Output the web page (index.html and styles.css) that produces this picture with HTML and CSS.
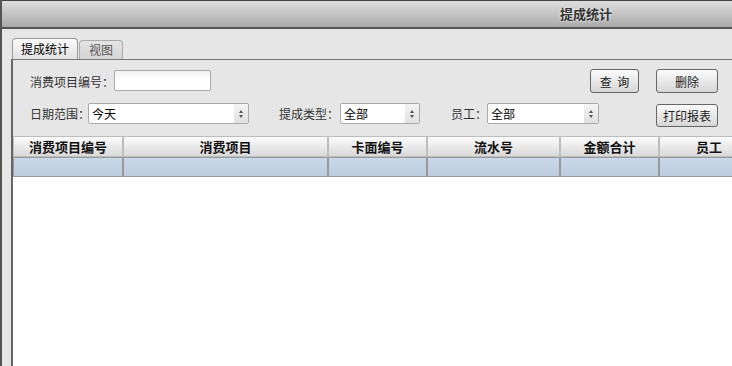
FILE: index.html
```html
<!DOCTYPE html>
<html lang="zh-CN">
<head>
    <meta charset="UTF-8">
    <title>提成统计</title>
    <link rel="stylesheet" href="styles.css">
</head>
<body>

<div class="window">
    <div class="titlebar">提成统计</div>

    <div class="content">
        <div class="tabs">
            <div class="tab active">提成统计</div>
            <div class="tab">视图</div>
        </div>

        <div class="panel">
            <div class="form">
                <div class="row">
                    <label class="lbl lbl-first">消费项目编号：</label>
                    <input type="text" class="txt">
                    <button class="btn btn-query">查&nbsp;&nbsp;询</button>
                    <button class="btn btn-del">删除</button>
                </div>
                <div class="row row-top">
                    <label class="lbl lbl-first lbl-date">日期范围：</label>
                    <div class="sel sel-date"><span>今天</span><i class="arr"></i></div>
                    <label class="lbl lbl-type">提成类型：</label>
                    <div class="sel sel-type"><span>全部</span><i class="arr"></i></div>
                    <label class="lbl lbl-emp">员工：</label>
                    <div class="sel sel-emp"><span>全部</span><i class="arr"></i></div>
                    <button class="btn btn-print">打印报表</button>
                </div>
            </div>

            <div class="grid">
                <div class="hrow">
                    <div class="hc c1">消费项目编号</div>
                    <div class="hc c2">消费项目</div>
                    <div class="hc c3">卡面编号</div>
                    <div class="hc c4">流水号</div>
                    <div class="hc c5">金额合计</div>
                    <div class="hc c6">员工</div>
                </div>
                <div class="drow">
                    <div class="dc c1"></div>
                    <div class="dc c2"></div>
                    <div class="dc c3"></div>
                    <div class="dc c4"></div>
                    <div class="dc c5"></div>
                    <div class="dc c6"></div>
                </div>
            </div>
        </div>
    </div>
</div>

</body>
</html>
```

FILE: styles.css
```css
html, body {
    margin: 0;
    padding: 0;
    width: 732px;
    height: 366px;
    overflow: hidden;
    background: #e6e6e6;
    font-family: "Noto Sans CJK SC", "DejaVu Sans", sans-serif;
}
.window {
    height: 366px;
    border-left: 2px solid #555;
    box-sizing: border-box;
}
.titlebar {
    height: 29px;
    box-sizing: border-box;
    border-top: 1px solid #444;
    border-bottom: 2px solid #555;
    background: linear-gradient(#dedede, #a9a9a9);
    padding-left: 558px;
    line-height: 26px;
    font-size: 13px;
    font-weight: bold;
    color: #333;
    text-shadow: 0 0 3px #fff;
}
.content {
    background: #e6e6e6;
    height: 337px;
}
.tabs {
    display: flex;
    align-items: flex-end;
    padding-left: 10px;
    height: 30px;
}
.tab {
    height: 18px;
    line-height: 17px;
    font-size: 12px;
    color: #555;
    padding: 0 9px;
    border: 1px solid #aaa;
    border-bottom: none;
    border-radius: 4px 4px 0 0;
    background: linear-gradient(#e4e4e4, #d4d4d4);
    margin-right: 1px;
}
.tab.active {
    height: 20px;
    line-height: 20px;
    color: #000;
    padding: 0 8px;
    border-color: #999;
    background: linear-gradient(#fafafa, #e2e2e2);
}
.panel {
    margin-left: 9px;
    border-left: 2px solid #666;
    border-top: 1px solid #777;
    height: 307px;
}
.form {
    padding-top: 9px;
    height: 67px;
}
.row {
    display: flex;
    align-items: center;
    height: 24px;
    margin-bottom: 10px;
}
.row-top {
    align-items: flex-start;
}
.row-top .lbl {
    line-height: 21px;
}
.lbl {
    font-size: 12px;
    color: #333;
    white-space: nowrap;
}
.lbl-first {
    margin-left: 17px;
}
.lbl-date {
    margin-right: -2px;
}
.lbl-type {
    margin-left: 30px;
    margin-right: 1px;
}
.lbl-emp {
    margin-left: 31px;
}
.txt {
    width: 97px;
    height: 21px;
    box-sizing: border-box;
    border: 1px solid #aaa;
    border-radius: 2px;
    background: linear-gradient(#f0f0f0, #fff 40%);
    margin: 0 0 2px 0;
    padding: 0;
}
.btn {
    height: 24px;
    box-sizing: border-box;
    border: 1px solid #666;
    border-radius: 3px;
    background: linear-gradient(#fbfbfb, #d6d6d6);
    font-family: inherit;
    font-size: 12px;
    color: #222;
    padding: 0;
}
.btn-query {
    width: 49px;
    margin-left: auto;
}
.btn-del {
    width: 62px;
    margin-left: 17px;
    margin-right: 14px;
}
.btn-print {
    width: 62px;
    height: 23px;
    margin-left: auto;
    margin-right: 14px;
    margin-top: 1px;
}
.sel {
    display: flex;
    align-items: center;
    height: 21px;
    box-sizing: border-box;
    border: 1px solid #aaa;
    border-radius: 2px;
    background: #fff;
    font-size: 12px;
    color: #000;
}
.sel span {
    flex: 1;
    padding-left: 3px;
}
.arr {
    width: 14px;
    height: 19px;
    background: linear-gradient(#f4f4f4, #e0e0e0);
    position: relative;
}
.arr::before, .arr::after {
    content: "";
    position: absolute;
    left: 5px;
    border-left: 2.5px solid transparent;
    border-right: 2.5px solid transparent;
}
.arr::before {
    top: 6px;
    border-bottom: 3px solid #555;
}
.arr::after {
    top: 11px;
    border-top: 3px solid #555;
}
.sel-date {
    width: 161px;
}
.sel-type {
    width: 80px;
}
.sel-emp {
    width: 112px;
}
.grid {
    background: #fff;
    height: 231px;
}
.hrow, .drow {
    display: flex;
}
.hc {
    height: 21px;
    box-sizing: border-box;
    border: 1px solid #bdbdbd;
    background: linear-gradient(#fbfbfb, #d9d9d9);
    font-size: 13px;
    font-weight: bold;
    color: #111;
    text-align: center;
    line-height: 19px;
    flex-shrink: 0;
}
.dc {
    height: 20px;
    box-sizing: border-box;
    border: 1px solid #999;
    background: linear-gradient(#cad9ea, #bccbdd);
    flex-shrink: 0;
}
.c1 { width: 110px; }
.c2 { width: 205px; }
.c3 { width: 99px; }
.c4 { width: 133px; }
.c5 { width: 99px; }
.c6 { width: 100px; }
```
